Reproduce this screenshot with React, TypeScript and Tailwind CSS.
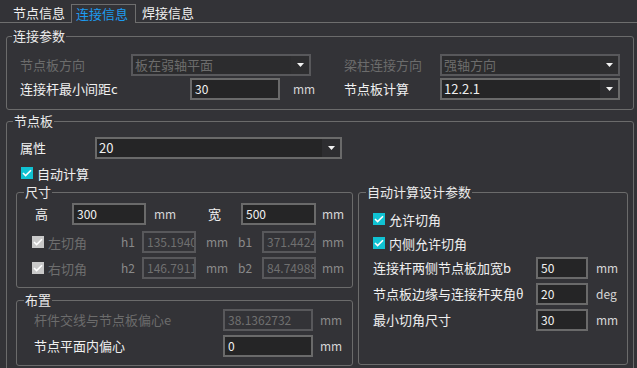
import type { ReactNode } from 'react';

const font = "font-['Noto_Sans_CJK_SC','Noto_Sans',sans-serif]";

function Arrow() {
  return (
    <svg width="7" height="4" viewBox="0 0 7 4" className="block">
      <path d="M0 0h7L3.5 4z" fill="#f2f2f2" />
    </svg>
  );
}

function Select({ value, width, disabled }: { value: string; width: string; disabled?: boolean }) {
  return (
    <div
      className={`flex h-[22px] shrink-0 border-2 ${width} ${
        disabled ? 'border-[#58585b] bg-[#2c2c2e] text-[#6c6c6c]' : 'border-[#6a6a6a] bg-[#252526] text-[#f0f0f0]'
      }`}
    >
      <span className="flex-1 pl-[2px] text-[13px] leading-[18px] overflow-hidden whitespace-nowrap">{value}</span>
      <span className={`flex w-[18px] items-center justify-center ${disabled ? 'bg-[#2e2e30]' : 'bg-[#2d2d30]'}`}>
        <Arrow />
      </span>
    </div>
  );
}

function Input({ value, width, disabled }: { value: string; width: string; disabled?: boolean }) {
  return (
    <div
      className={`h-[22px] shrink-0 overflow-hidden border-2 pl-[3px] text-[12px] leading-[18px] ${width} ${
        disabled ? 'border-[#58585b] bg-[#333337] text-[#707070]' : 'border-[#6a6a6a] bg-[#252526] text-[#f2f2f2]'
      }`}
    >
      <span className="block overflow-hidden whitespace-nowrap">{value}</span>
    </div>
  );
}

function Check({ label, disabled }: { label: string; disabled?: boolean }) {
  return (
    <div className="flex items-center gap-[4px]">
      <span
        className={`flex h-[12px] w-[12px] items-center justify-center ${disabled ? 'bg-[#c9c9c9]' : 'bg-[#10c2d2]'}`}
      >
        <svg width="10" height="8" viewBox="0 0 10 8">
          <path d="M1 4l2.6 2.6L9 1.2" fill="none" stroke="#ffffff" strokeWidth="1.6" />
        </svg>
      </span>
      <span className={`text-[13px] leading-none ${disabled ? 'text-[#6e6e6e]' : 'text-[#f0f0f0]'}`}>{label}</span>
    </div>
  );
}

function Group({ title, className, legendGap, children }: { title: string; className: string; legendGap: string; children: ReactNode }) {
  return (
    <fieldset className={`rounded-[3px] border border-[#6b6b6b] ${className}`}>
      <legend className={`${legendGap} px-[1px] text-[13px] leading-[16px] text-[#ececec]`}>{title}</legend>
      {children}
    </fieldset>
  );
}

const Unit = ({ children, className = 'text-[#d6d6d6]' }: { children: ReactNode; className?: string }) => (
  <span className={`text-[12px] leading-none ${className}`}>{children}</span>
);

export default function App() {
  return (
    <div className={`h-[368px] w-[637px] overflow-hidden bg-[#333337] text-[13px] text-[#f0f0f0] ${font}`}>
      {/* tabs */}
      <div className="flex h-[23px] items-end">
        <div className="h-[23px] w-[71px] border-b border-[#6e6e6e] pl-[13px] pt-[5px] leading-[16px]">节点信息</div>
        <div className="h-[19px] w-[65px] border border-b-0 border-[#6e6e6e] pl-[4px] pt-[1px] leading-[16px] text-[#1d9bf0]">
          连接信息
        </div>
        <div className="h-[23px] flex-1 border-b border-[#6e6e6e] pl-[6px] pt-[5px] leading-[16px]">焊接信息</div>
      </div>

      <Group title="连接参数" className="ml-[6px] mt-[5px] h-[82px] w-[628px]" legendGap="ml-[5px]">
        <div className="flex flex-col gap-[2px] pl-[13px] pt-[10px]">
          <div className="flex h-[22px] items-center">
            <span className="w-[111px] text-[#6c6c6c]">节点板方向</span>
            <Select value="板在弱轴平面" width="w-[180px]" disabled />
            <span className="w-[33px]" />
            <span className="w-[96px] text-[#6c6c6c]">梁柱连接方向</span>
            <Select value="强轴方向" width="w-[180px]" disabled />
          </div>
          <div className="flex h-[22px] items-center">
            <span className="w-[170px]">连接杆最小间距c</span>
            <Input value="30" width="w-[90px]" />
            <span className="w-[64px] pl-[13px]">
              <Unit>mm</Unit>
            </span>
            <span className="w-[96px]">节点板计算</span>
            <Select value="12.2.1" width="w-[180px]" />
          </div>
        </div>
      </Group>

      <Group title="节点板" className="ml-[6px] mt-[3px] h-[260px] w-[628px]" legendGap="ml-[6px]">
        <div className="mt-[8px] flex h-[22px] items-center pl-[13px]">
          <span className="w-[75px]">属性</span>
          <Select value="20" width="w-[247px]" />
        </div>
        <div className="mt-[8px] flex h-[12px] items-center pl-[14px]">
          <Check label="自动计算" />
        </div>

        <div className="mt-[5px] flex gap-[5px] pl-[9px]">
          <div className="flex flex-col gap-[4px]">
            <Group title="尺寸" className="h-[104px] w-[337px]" legendGap="ml-[7px]">
              <div className="flex flex-col gap-[6px] pt-[3px]">
                <div className="flex h-[22px] items-center pl-[18px]">
                  <span className="w-[37px]">高</span>
                  <Input value="300" width="w-[74px]" />
                  <span className="w-[62px] pl-[8px]">
                    <Unit>mm</Unit>
                  </span>
                  <span className="w-[33px]">宽</span>
                  <Input value="500" width="w-[75px]" />
                  <span className="pl-[6px]">
                    <Unit>mm</Unit>
                  </span>
                </div>
                <div className="flex flex-col gap-[4px]">
                  {[
                    ['左切角', 'h1', '135.194005', 'b1', '371.442476'],
                    ['右切角', 'h2', '146.791178', 'b2', '84.7498875'],
                  ].map(([name, h, hv, b, bv]) => (
                    <div key={name} className="flex h-[22px] items-center pl-[15px]">
                      <span className="w-[89px]">
                        <Check label={name} disabled />
                      </span>
                      <span className="w-[21px] text-[12px] text-[#8a8a8a]">{h}</span>
                      <Input value={hv} width="w-[54px]" disabled />
                      <span className="w-[42px] pl-[10px]">
                        <Unit className="text-[#8a8a8a]">mm</Unit>
                      </span>
                      <span className="w-[24px] text-[12px] text-[#8a8a8a]">{b}</span>
                      <Input value={bv} width="w-[54px]" disabled />
                      <span className="pl-[6px]">
                        <Unit className="text-[#8a8a8a]">mm</Unit>
                      </span>
                    </div>
                  ))}
                </div>
              </div>
            </Group>

            <Group title="布置" className="h-[74px] w-[337px]" legendGap="ml-[7px]">
              <div className="flex flex-col gap-[4px] pl-[17px] pt-[1px]">
                <div className="flex h-[22px] items-center">
                  <span className="w-[189px] text-[#6c6c6c]">杆件交线与节点板偏心e</span>
                  <Input value="38.1362732" width="w-[90px]" disabled />
                  <span className="pl-[7px]">
                    <Unit className="text-[#8a8a8a]">mm</Unit>
                  </span>
                </div>
                <div className="flex h-[22px] items-center">
                  <span className="w-[189px]">节点平面内偏心</span>
                  <Input value="0" width="w-[90px]" />
                  <span className="pl-[7px]">
                    <Unit>mm</Unit>
                  </span>
                </div>
              </div>
            </Group>
          </div>

          <Group title="自动计算设计参数" className="h-[181px] w-[270px]" legendGap="ml-[7px]">
            <div className="flex flex-col pl-[14px] pt-[13px]">
              <div className="flex h-[12px] items-center">
                <Check label="允许切角" />
              </div>
              <div className="mt-[12px] flex h-[12px] items-center">
                <Check label="内侧允许切角" />
              </div>
              <div className="mt-[8px] flex flex-col gap-[4px]">
                {[
                  ['连接杆两侧节点板加宽b', '50', 'mm'],
                  ['节点板边缘与连接杆夹角θ', '20', 'deg'],
                  ['最小切角尺寸', '30', 'mm'],
                ].map(([label, v, u]) => (
                  <div key={label} className="flex h-[22px] items-center">
                    <span className="w-[163px]">{label}</span>
                    <Input value={v} width="w-[52px]" />
                    <span className="pl-[8px]">
                      <Unit>{u}</Unit>
                    </span>
                  </div>
                ))}
              </div>
            </div>
          </Group>
        </div>
      </Group>
    </div>
  );
}
